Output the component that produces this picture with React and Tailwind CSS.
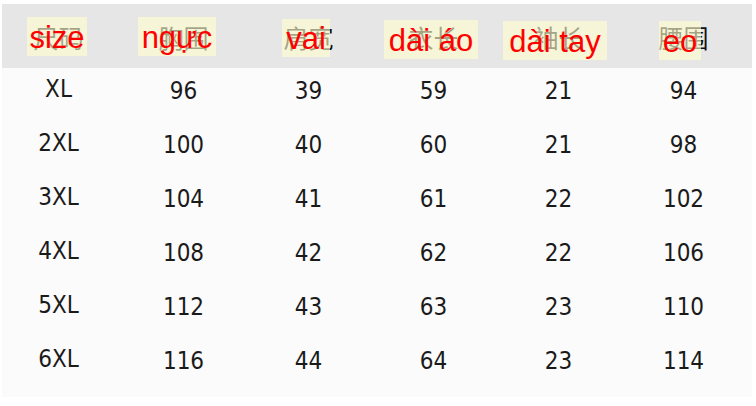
import React from "react";

const headers = [
  { zh: "尺码", vi: "size", left: 31, top: 13, w: 60, h: 39 },
  { zh: "胸围", vi: "ngực", left: 17, top: 13, w: 78, h: 39 },
  { zh: "肩宽", vi: "vai", left: 36, top: 15, w: 48, h: 38 },
  { zh: "衣长", vi: "dài áo", left: 13, top: 16, w: 94, h: 39 },
  { zh: "袖长", vi: "dài tay", left: 7, top: 17, w: 104, h: 39 },
  { zh: "腰围", vi: "eo", left: 38, top: 17, w: 42, h: 39 },
];

const rows = [
  ["XL", "96", "39", "59", "21", "94"],
  ["2XL", "100", "40", "60", "21", "98"],
  ["3XL", "104", "41", "61", "22", "102"],
  ["4XL", "108", "42", "62", "22", "106"],
  ["5XL", "112", "43", "63", "23", "110"],
  ["6XL", "116", "44", "64", "23", "114"],
];

export default function App() {
  return (
    <div className="w-[756px] h-[406px] bg-white pt-[4px] pl-[2px] pr-[4px] pb-[9px] overflow-hidden">
      <div className="w-[750px] h-[393px] bg-[#fbfbfb] overflow-hidden">
        <div className="h-[64px] bg-[#e6e6e6] overflow-hidden">
          <div className="-ml-[6px] grid grid-cols-[repeat(6,125px)] h-full">
            {headers.map((c, i) => (
              <div key={i} className="relative flex items-center justify-center h-full">
                <span className="text-[25px] leading-none text-[#111] font-['Noto_Sans_CJK_SC',sans-serif] pt-[2px]">
                  {c.zh}
                </span>
                <div
                  className="absolute flex items-center justify-center bg-[rgba(255,253,205,0.62)]"
                  style={{ left: c.left, top: c.top, width: c.w, height: c.h }}
                >
                  <span className="text-[31px] leading-[31px] text-[#ff0000] whitespace-nowrap font-['Liberation_Sans',Arial,sans-serif] pt-[1px]">
                    {c.vi}
                  </span>
                </div>
              </div>
            ))}
          </div>
        </div>
        <div className="-ml-[6px]">
          {rows.map((r, ri) => (
            <div key={ri} className="grid grid-cols-[repeat(6,125px)] h-[54px] items-center pb-[12px]">
              {r.map((v, ci) => (
                <div
                  key={ci}
                  className={`text-center text-[24px] leading-[28px] text-[#1a1a1a] font-['DejaVu_Sans_Condensed','DejaVu_Sans',sans-serif] ${ci === 0 ? "" : "pt-[3px]"}`}
                >
                  {v}
                </div>
              ))}
            </div>
          ))}
        </div>
      </div>
    </div>
  );
}
